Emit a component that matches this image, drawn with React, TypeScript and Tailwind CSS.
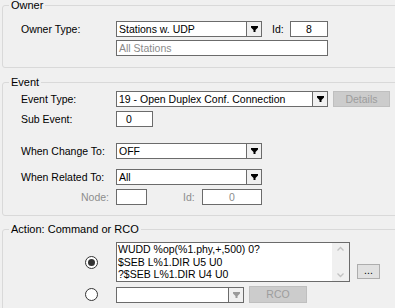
import React from 'react';

const font = { fontFamily: '"Liberation Sans", Arial, sans-serif' };

const Arrow = ({ disabled = false }: { disabled?: boolean }) => (
  <svg width="7" height="6" viewBox="0 0 7 6">
    <path d="M0 0h7v1.5L4.5 4v2h-2V4L0 1.5z" fill={disabled ? '#9a9a9a' : '#000'} />
  </svg>
);

const Combo = ({ value, w, disabled = false }: { value: string; w: string; disabled?: boolean }) => (
  <div className={`flex h-[16px] ${w} border border-[#6b6b6b] bg-white`}>
    <div className="flex-1 pl-[2px] leading-[14px] text-black whitespace-nowrap overflow-hidden">{value}</div>
    <div className="flex w-[15px] items-center justify-center border-l border-[#6b6b6b] bg-[#f0f0f0]">
      <Arrow disabled={disabled} />
    </div>
  </div>
);

const Box = ({ value, w, className = '' }: { value: string; w: string; className?: string }) => (
  <div className={`h-[16px] ${w} border border-[#6b6b6b] bg-white leading-[14px] ${className}`}>{value}</div>
);

const Group = ({ title, className = '', children }: { title: string; className?: string; children: React.ReactNode }) => (
  <fieldset className={`ml-[2px] mr-[-12px] border border-[#d9d9d9] rounded-[3px] ${className}`}>
    <legend className="ml-[6px] px-[2px] text-[11px] leading-[11px] text-black">{title}</legend>
    {children}
  </fieldset>
);

const Label = ({ children }: { children: React.ReactNode }) => (
  <div className="w-[113px] shrink-0 whitespace-nowrap pl-[18px] leading-[16px]">{children}</div>
);

export default function App() {
  return (
    <div className="w-[395px] h-[308px] overflow-hidden bg-[#f0f0f0] text-[10.5px] text-black" style={font}>
      <Group title="Owner" className="pb-[11px]">
        <div className="mt-[10px] flex items-center">
          <Label>Owner Type:</Label>
          <Combo value="Stations w. UDP" w="w-[146px]" />
          <div className="ml-[10px] w-[18px] leading-[16px]">Id:</div>
          <Box value="8" w="w-[38px]" className="text-center" />
        </div>
        <div className="mt-[3px] flex">
          <div className="w-[113px] shrink-0" />
          <Box value="All Stations" w="w-[212px]" className="pl-[2px] text-[#8a8a8a]" />
        </div>
      </Group>

      <Group title="Event" className="mt-[9px] pb-[10px]">
        <div className="mt-[3px] flex items-center">
          <Label>Event Type:</Label>
          <Combo value="19 - Open Duplex Conf. Connection" w="w-[212px]" />
          <div className="ml-[5px] h-[16px] w-[57px] shrink-0 border border-[#bfbfbf] bg-[#cccccc] text-center leading-[14px] text-[#9d9d9d]">
            Details
          </div>
        </div>
        <div className="mt-[4px] flex items-center">
          <Label>Sub Event:</Label>
          <Box value="0" w="w-[37px]" className="pl-[9px]" />
        </div>
        <div className="mt-[16px] flex items-center">
          <Label>When Change To:</Label>
          <Combo value="OFF" w="w-[146px]" />
        </div>
        <div className="mt-[10px] flex items-center">
          <Label>When Related To:</Label>
          <Combo value="All" w="w-[146px]" />
        </div>
        <div className="mt-[4px] flex items-center">
          <div className="w-[113px] shrink-0 pr-[7px] text-right leading-[16px] text-[#8d8d8d]">Node:</div>
          <Box value="" w="w-[31px]" />
          <div className="ml-[36px] w-[19px] leading-[16px] text-[#8d8d8d]">Id:</div>
          <Box value="0" w="w-[60px]" className="text-center text-[#8d8d8d]" />
        </div>
      </Group>

      <Group title="Action: Command or RCO" className="mt-[8px] pb-[20px]">
        <div className="mt-[7px] flex items-center">
          <div className="flex w-[113px] shrink-0 justify-end pr-[18px]">
            <div className="flex h-[13px] w-[13px] items-center justify-center rounded-full border border-[#333] bg-white">
              <div className="h-[7px] w-[7px] rounded-full bg-[#333]" />
            </div>
          </div>
          <div className="flex h-[40px] w-[234px] shrink-0 border border-[#6b6b6b] bg-white">
            <div className="flex-1 pl-[1px] leading-[12.5px] whitespace-pre">
              {'WUDD %op(%1.phy,+,500) 0?\n$SEB L%1.DIR U5 U0\n?$SEB L%1.DIR U4 U0'}
            </div>
            <div className="flex w-[17px] flex-col items-center justify-between bg-[#f0f0f0] py-[3px]">
              <svg width="7" height="5" viewBox="0 0 7 5"><path d="M0.5 4.5L3.5 1.5L6.5 4.5" stroke="#c2c2c2" fill="none" strokeWidth="1.3" /></svg>
              <svg width="7" height="5" viewBox="0 0 7 5"><path d="M0.5 0.5L3.5 3.5L6.5 0.5" stroke="#c2c2c2" fill="none" strokeWidth="1.3" /></svg>
            </div>
          </div>
          <div className="ml-[7px] mt-[18px] h-[15px] w-[23px] shrink-0 border border-[#adadad] bg-[#e1e1e1] text-center leading-[10px]">
            ...
          </div>
        </div>
        <div className="mt-[4px] flex items-center">
          <div className="flex w-[113px] shrink-0 justify-end pr-[18px]">
            <div className="h-[13px] w-[13px] rounded-full border border-[#333] bg-white" />
          </div>
          <Combo value="" w="w-[128px]" disabled />
          <div className="ml-[5px] h-[17px] w-[58px] shrink-0 border border-[#bfbfbf] bg-[#cccccc] text-center leading-[15px] text-[#9d9d9d]">
            RCO
          </div>
        </div>
      </Group>
    </div>
  );
}
